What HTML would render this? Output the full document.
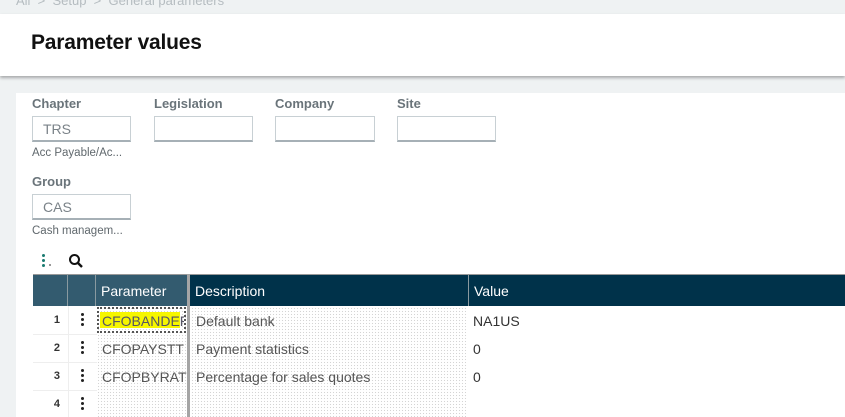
<!DOCTYPE html>
<html><head><style>
*{margin:0;padding:0;box-sizing:border-box}
body{width:845px;height:417px;overflow:hidden;background:#eff2f3;font-family:"Liberation Sans",sans-serif;position:relative}
.abs{position:absolute}
.bc{left:16px;top:-7px;font-size:13px;color:#b5bcc0}
.hdr{left:0;top:14px;width:845px;height:62px;background:#fff;box-shadow:0 2px 3px rgba(0,0,0,.3)}
.title{left:31px;top:31px;font-size:21px;font-weight:bold;color:#111;letter-spacing:-.2px}
.card{left:16px;top:93px;width:829px;height:324px;background:#fff}
.lbl{font-size:13px;font-weight:bold;color:#6a747a}
.inp{width:99px;height:26px;border:1px solid #c8d0d4;border-bottom:2px solid #a6b0b6;font-size:14px;color:#7a8288;padding:4px 0 0 10px}
.sub{font-size:11.5px;color:#60686d}
.th{top:274px;height:32px;color:#fff;font-size:14px;padding:8px 0 0 5px}
.dots{background-image:radial-gradient(#d4d4d4 0.6px,transparent 0.8px);background-size:3px 3px}
.cell{font-size:14px;color:#555;white-space:nowrap;overflow:hidden}
.rn{font-size:11px;font-weight:bold;color:#333;text-align:right;width:27px}
.kb{width:3px}
.kb i{display:block;width:3px;height:3px;border-radius:50%;background:#222;margin-bottom:2px}
</style></head><body>
<div class="abs bc">All &nbsp;&gt;&nbsp; Setup &nbsp;&gt;&nbsp; General parameters</div>
<div class="abs hdr"></div>
<div class="abs title">Parameter values</div>
<div class="abs card"></div>

<div class="abs lbl" style="left:32px;top:96px">Chapter</div>
<div class="abs lbl" style="left:154px;top:96px">Legislation</div>
<div class="abs lbl" style="left:275px;top:96px">Company</div>
<div class="abs lbl" style="left:397px;top:96px">Site</div>
<div class="abs inp" style="left:32px;top:116px">TRS</div>
<div class="abs inp" style="left:154px;top:116px"></div>
<div class="abs inp" style="left:275px;top:116px;width:100px"></div>
<div class="abs inp" style="left:397px;top:116px"></div>
<div class="abs sub" style="left:32px;top:147px">Acc Payable/Ac...</div>
<div class="abs lbl" style="left:32px;top:174px">Group</div>
<div class="abs inp" style="left:32px;top:194px">CAS</div>
<div class="abs sub" style="left:32px;top:225px">Cash managem...</div>

<div class="abs kb" style="left:42px;top:254px"><i style="background:#1a7a70"></i><i style="background:#1a7a70"></i><i style="background:#1a7a70"></i></div>
<div class="abs" style="left:49px;top:264px;width:2px;height:2px;background:#999"></div>
<svg class="abs" style="left:68px;top:253px" width="16" height="16" viewBox="0 0 16 16"><circle cx="6.5" cy="6.5" r="4.5" fill="none" stroke="#111" stroke-width="2"/><path d="M10 10l4 4" stroke="#111" stroke-width="2.4"/></svg>

<div class="abs th" style="left:33px;width:35px;background:#335b6f;border-right:1px solid #8a9aa0;border-top:1px solid #999"></div>
<div class="abs th" style="left:68px;width:28px;background:#335b6f;border-right:1px solid #8a9aa0;border-top:1px solid #999"></div>
<div class="abs th" style="left:96px;width:91px;background:#335b6f;border-top:1px solid #999">Parameter</div>
<div class="abs" style="left:187px;top:274px;width:3px;height:143px;background:#a5a5a5"></div>
<div class="abs th" style="left:190px;width:279px;background:#00324a;border-right:1px solid #8a9aa0;border-top:1px solid #999">Description</div>
<div class="abs th" style="left:469px;width:376px;background:#00324a;border-top:1px solid #999">Value</div>

<div class="abs dots" style="left:97px;top:307px;width:89px;height:110px"></div>
<div class="abs dots" style="left:191px;top:307px;width:275px;height:110px"></div>
<div class="abs" style="left:33px;top:334px;width:64px;height:1px;background:#eee"></div>
<div class="abs" style="left:33px;top:362px;width:64px;height:1px;background:#eee"></div>
<div class="abs" style="left:33px;top:390px;width:64px;height:1px;background:#eee"></div>

<div class="abs" style="left:97px;top:307px;width:89px;height:26px;border:2px dotted #555"></div>
<div class="abs" style="left:100px;top:312px;width:80px;height:16px;background:#f6f600"></div>
<div class="abs" style="left:68px;top:306px;width:1px;height:111px;background:#eee"></div>

<div class="abs rn" style="left:33px;top:314px">1</div>
<div class="abs rn" style="left:33px;top:342px">2</div>
<div class="abs rn" style="left:33px;top:370px">3</div>
<div class="abs rn" style="left:33px;top:398px">4</div>
<div class="abs kb" style="left:81px;top:313px"><i></i><i></i><i></i></div>
<div class="abs kb" style="left:81px;top:341px"><i></i><i></i><i></i></div>
<div class="abs kb" style="left:81px;top:369px"><i></i><i></i><i></i></div>
<div class="abs kb" style="left:81px;top:397px"><i></i><i></i><i></i></div>

<div class="abs cell" style="left:102px;top:313px;width:82px;color:#556">CFOBANDEF</div>
<div class="abs cell" style="left:102px;top:341px">CFOPAYSTT</div>
<div class="abs cell" style="left:102px;top:369px">CFOPBYRAT</div>
<div class="abs cell" style="left:196px;top:313px">Default bank</div>
<div class="abs cell" style="left:196px;top:341px">Payment statistics</div>
<div class="abs cell" style="left:196px;top:369px">Percentage for sales quotes</div>
<div class="abs cell" style="left:473px;top:313px;color:#333">NA1US</div>
<div class="abs cell" style="left:473px;top:341px;color:#333">0</div>
<div class="abs cell" style="left:473px;top:369px;color:#333">0</div>
</body></html>
